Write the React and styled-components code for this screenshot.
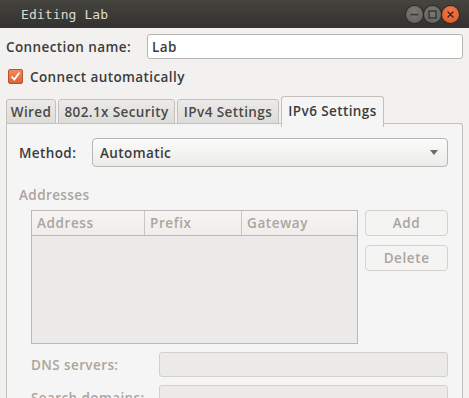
import React from "react";
import styled, { createGlobalStyle } from "styled-components";

const Global = createGlobalStyle`
  html, body { margin: 0; padding: 0; background: #f2f1f0; }
  body { font-family: "Open Sans", "Noto Sans", sans-serif; }
  * { box-sizing: border-box; }
`;

const Window = styled.div`
  width: 469px;
  height: 398px;
  overflow: hidden;
  background: #f2f1f0;
  display: flex;
  flex-direction: column;
`;

const TitleBar = styled.div`
  height: 28px;
  flex: none;
  background: linear-gradient(#45443f, #3a3935 60%, #33322e);
  display: flex;
  align-items: center;
  padding: 0 10px 0 21px;
`;

const Title = styled.div`
  flex: 1;
  font-family: "DejaVu Sans Mono", monospace;
  font-size: 13px;
  color: #dfdbd2;
  letter-spacing: 0.1px;
`;

const WinButtons = styled.div`
  display: flex;
  gap: 1px;
`;

const WinBtn = styled.div`
  width: 17px;
  height: 17px;
  border-radius: 50%;
  display: flex;
  align-items: center;
  justify-content: center;
  background: ${(p) =>
    p.$close
      ? "radial-gradient(circle at 50% 35%, #f37a4b, #e2531f)"
      : "radial-gradient(circle at 50% 35%, #7b7a76, #5e5d59)"};
  box-shadow: 0 0 0 1px #2a2926;
`;

const Body = styled.div`
  flex: 1;
  display: flex;
  flex-direction: column;
  padding: 6px 6px 0 6px;
  min-height: 0;
`;

const NameRow = styled.div`
  display: flex;
  align-items: center;
  height: 25px;
`;

const Label = styled.label`
  font-size: 13.5px;
  font-weight: 600;
  letter-spacing: 0.4px;
  color: ${(p) => (p.$disabled ? "#aba59d" : "#3c3c3c")};
  width: ${(p) => (p.$w ? `${p.$w}px` : "auto")};
  flex: none;
  white-space: nowrap;
`;

const TextInput = styled.div`
  flex: 1;
  height: ${(p) => (p.$h ? `${p.$h}px` : "25px")};
  background: ${(p) => (p.$disabled ? "#ebeae8" : "#ffffff")};
  border: 1px solid ${(p) => (p.$disabled ? "#d3d0cc" : "#b9b6b1")};
  border-radius: 3px;
  padding: 0 4px;
  display: flex;
  align-items: center;
  font-size: 13.5px;
  font-weight: 600;
  letter-spacing: 0.4px;
  color: #3c3c3c;
`;

const CheckRow = styled.div`
  display: flex;
  align-items: center;
  gap: 7px;
  margin-top: 10px;
  padding-left: 2px;
  height: 15px;
`;

const CheckBox = styled.div`
  width: 15px;
  height: 15px;
  border-radius: 2px;
  border: 1px solid #b5532a;
  background: linear-gradient(#f38b5c, #dd6230);
  display: flex;
  align-items: center;
  justify-content: center;
`;

const Tabs = styled.div`
  display: flex;
  align-items: flex-end;
  gap: 2px;
  margin-top: 12px;
  height: 28px;
  position: relative;
  z-index: 1;
`;

const Tab = styled.div`
  height: ${(p) => (p.$active ? "31px" : "25px")};
  margin-bottom: ${(p) => (p.$active ? "-3px" : "0")};
  padding: ${(p) => (p.$active ? "0 0 3px" : "0")};
  display: flex;
  align-items: center;
  width: ${(p) => p.$w}px;
  justify-content: center;
  font-size: 13.5px;
  font-weight: 600;
  letter-spacing: 0.4px;
  color: ${(p) => (p.$active ? "#3c3c3c" : "#4a4a4a")};
  border: 1px solid #c4c1bc;
  border-bottom: ${(p) => (p.$active ? "none" : "1px solid #c4c1bc")};
  border-radius: 3px 3px 0 0;
  background: ${(p) =>
    p.$active ? "#f5f5f5" : "linear-gradient(#ebeae8, #dedcd8)"};
  white-space: nowrap;
`;

const Panel = styled.div`
  flex: 1;
  margin-top: -1px;
  background: #f5f5f5;
  border: 1px solid #c4c1bc;
  border-bottom: none;
  border-radius: 0 3px 0 0;
  padding: 14px 14px 0 12px;
  display: flex;
  flex-direction: column;
`;

const MethodRow = styled.div`
  display: flex;
  align-items: center;
  height: 29px;
`;

const Combo = styled.div`
  flex: 1;
  height: 29px;
  border: 1px solid #b9b6b1;
  border-radius: 4px;
  background: linear-gradient(#fbfbfa, #ecebe9);
  display: flex;
  align-items: center;
  padding: 0 9px 0 7px;
  font-size: 13.5px;
  font-weight: 600;
  letter-spacing: 0.4px;
  color: #3c3c3c;
  justify-content: space-between;
`;

const SectionTitle = styled.div`
  margin-top: 19px;
  font-size: 13.5px;
  font-weight: 600;
  letter-spacing: 0.4px;
  color: #aba59d;
`;

const AddrArea = styled.div`
  display: flex;
  gap: 7px;
  margin-top: 6px;
  padding-left: 12px;
`;

const Table = styled.div`
  width: 328px;
  height: 134px;
  border: 1px solid #bcb9b5;
  background: #ebeae8;
  display: flex;
  flex-direction: column;
`;

const HeaderRow = styled.div`
  display: grid;
  grid-template-columns: 112px 97px 1fr;
  height: 25px;
  border-bottom: 1px solid #bcb9b5;
  background: linear-gradient(#f6f5f4, #eeedeb);
`;

const HeaderCell = styled.div`
  display: flex;
  align-items: center;
  padding-left: 5px;
  font-size: 13.5px;
  font-weight: 600;
  color: #aba59d;
  letter-spacing: 0.6px;
  border-left: ${(p) => (p.$first ? "none" : "1px solid #c9c6c2")};
`;

const ButtonCol = styled.div`
  display: flex;
  flex-direction: column;
  gap: 9px;
  width: 83px;
`;

const Button = styled.div`
  height: 26px;
  border: 1px solid #d5d2ce;
  border-radius: 4px;
  background: #f4f4f3;
  display: flex;
  align-items: center;
  justify-content: center;
  font-size: 13.5px;
  font-weight: 600;
  color: #aba59d;
  letter-spacing: 0.6px;
`;

const FieldRow = styled.div`
  display: flex;
  align-items: center;
  padding-left: 12px;
  margin-top: ${(p) => p.$mt}px;
`;

export default function App() {
  return (
    <>
      <Global />
      <Window>
        <TitleBar>
          <Title>Editing Lab</Title>
          <WinButtons>
            <WinBtn>
              <svg width="9" height="9" viewBox="0 0 9 9">
                <rect x="0.5" y="3.8" width="8" height="1.6" fill="#3a3935" />
              </svg>
            </WinBtn>
            <WinBtn>
              <svg width="9" height="9" viewBox="0 0 9 9">
                <rect x="1" y="1" width="7" height="7" fill="none" stroke="#3a3935" strokeWidth="1.5" />
              </svg>
            </WinBtn>
            <WinBtn $close>
              <svg width="9" height="9" viewBox="0 0 9 9">
                <path d="M2 2 L7 7 M7 2 L2 7" stroke="#3a2a22" strokeWidth="1.5" strokeLinecap="round" />
              </svg>
            </WinBtn>
          </WinButtons>
        </TitleBar>
        <Body>
          <NameRow>
            <Label $w={141}>Connection name:</Label>
            <TextInput>Lab</TextInput>
          </NameRow>
          <CheckRow>
            <CheckBox>
              <svg width="11" height="11" viewBox="0 0 11 11">
                <path d="M1.5 5.5 L4.3 8.5 L9.5 1.5" fill="none" stroke="#ffffff" strokeWidth="1.8" />
              </svg>
            </CheckBox>
            <Label>Connect automatically</Label>
          </CheckRow>
          <Tabs>
            <Tab $w={50}>Wired</Tab>
            <Tab $w={117}>802.1x Security</Tab>
            <Tab $w={102}>IPv4 Settings</Tab>
            <Tab $w={103} $active>IPv6 Settings</Tab>
          </Tabs>
          <Panel>
            <MethodRow>
              <Label $w={73}>Method:</Label>
              <Combo>
                <span>Automatic</span>
                <svg width="8" height="5" viewBox="0 0 8 5">
                  <path d="M0 0 L8 0 L4 5 Z" fill="#6c6b68" />
                </svg>
              </Combo>
            </MethodRow>
            <SectionTitle>Addresses</SectionTitle>
            <AddrArea>
              <Table>
                <HeaderRow>
                  <HeaderCell $first>Address</HeaderCell>
                  <HeaderCell>Prefix</HeaderCell>
                  <HeaderCell>Gateway</HeaderCell>
                </HeaderRow>
              </Table>
              <ButtonCol>
                <Button>Add</Button>
                <Button>Delete</Button>
              </ButtonCol>
            </AddrArea>
            <FieldRow $mt={8}>
              <Label $w={128} $disabled>DNS servers:</Label>
              <TextInput $disabled $h={25} />
            </FieldRow>
            <FieldRow $mt={8}>
              <Label $w={128} $disabled>Search domains:</Label>
              <TextInput $disabled $h={25} />
            </FieldRow>
          </Panel>
        </Body>
      </Window>
    </>
  );
}
